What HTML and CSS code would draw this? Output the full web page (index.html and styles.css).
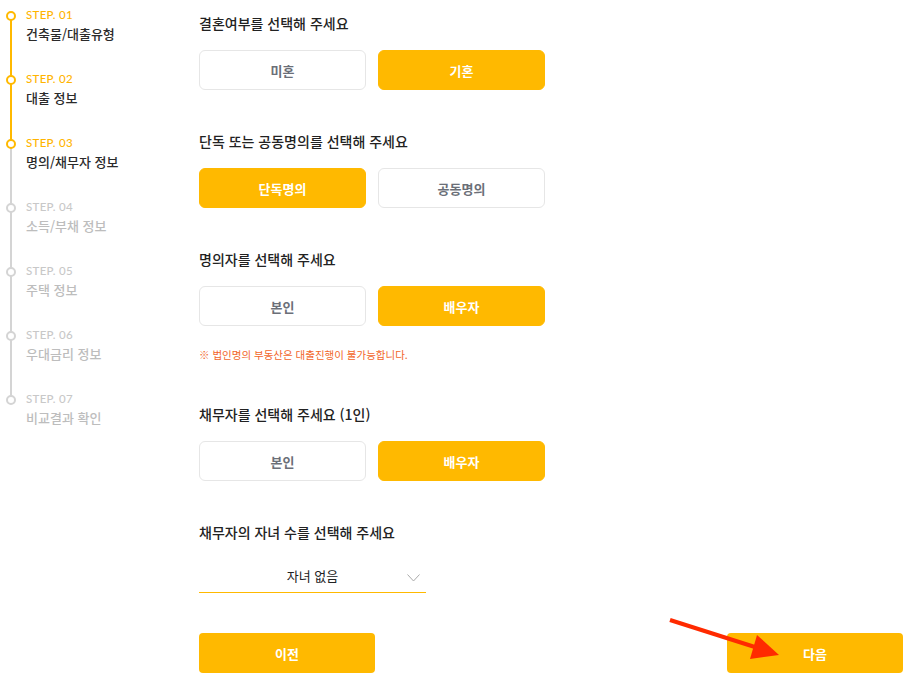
FILE: index.html
```html
<!DOCTYPE html>
<html lang="ko">
<head>
<meta charset="utf-8">
<link rel="stylesheet" href="styles.css">
</head>
<body>
<div class="page">
  <aside class="steps">
    <div class="step done"><span class="dot"></span><div class="label">STEP. 01</div><div class="title">건축물/대출유형</div></div>
    <div class="step done"><span class="dot"></span><div class="label">STEP. 02</div><div class="title">대출 정보</div></div>
    <div class="step current"><span class="dot"></span><div class="label">STEP. 03</div><div class="title">명의/채무자 정보</div></div>
    <div class="step"><span class="dot"></span><div class="label">STEP. 04</div><div class="title">소득/부채 정보</div></div>
    <div class="step"><span class="dot"></span><div class="label">STEP. 05</div><div class="title">주택 정보</div></div>
    <div class="step"><span class="dot"></span><div class="label">STEP. 06</div><div class="title">우대금리 정보</div></div>
    <div class="step last"><span class="dot"></span><div class="label">STEP. 07</div><div class="title">비교결과 확인</div></div>
  </aside>
  <main class="form">
    <section class="q">
      <h2>결혼여부를 선택해 주세요</h2>
      <div class="opts"><button class="opt">미혼</button><button class="opt on">기혼</button></div>
    </section>
    <section class="q">
      <h2>단독 또는 공동명의를 선택해 주세요</h2>
      <div class="opts"><button class="opt on">단독명의</button><button class="opt">공동명의</button></div>
    </section>
    <section class="q">
      <h2>명의자를 선택해 주세요</h2>
      <div class="opts"><button class="opt">본인</button><button class="opt on">배우자</button></div>
      <p class="note">※ 법인명의 부동산은 대출진행이 불가능합니다.</p>
    </section>
    <section class="q">
      <h2>채무자를 선택해 주세요 (1인)</h2>
      <div class="opts"><button class="opt">본인</button><button class="opt on">배우자</button></div>
    </section>
    <section class="q">
      <h2>채무자의 자녀 수를 선택해 주세요</h2>
      <div class="select"><span>자녀 없음</span>
        <svg class="chev" width="13" height="8" viewBox="0 0 13 8"><path d="M0.5 0.5 L6.5 7 L12.5 0.5" fill="none" stroke="#aaa" stroke-width="1"/></svg>
      </div>
    </section>
    <div class="nav">
      <button class="navbtn">이전</button>
      <button class="navbtn">다음</button>
    </div>
  </main>
</div>
<svg class="arrow" width="130" height="60" viewBox="660 610 130 60">
  <line x1="670" y1="620" x2="758" y2="648" stroke="#ff2a00" stroke-width="4" stroke-linecap="butt"/>
  <polygon points="757,635 779,655 750,659" fill="#ff2a00"/>
</svg>
</body>
</html>
```
FILE: styles.css
```css
* { box-sizing: border-box; }
html, body { margin: 0; padding: 0; background: #fff; }
body {
  font-family: "Noto Sans CJK KR", "Noto Sans", sans-serif;
  color: #222;
  width: 916px;
  height: 693px;
  overflow: hidden;
  position: relative;
}
.page {
  display: grid;
  grid-template-columns: 199px 704px;
}
.steps {
  padding-top: 8px;
}
.step {
  position: relative;
  height: 64px;
  padding-left: 26px;
}
.step::before {
  content: "";
  position: absolute;
  left: 10px;
  top: 8px;
  width: 2px;
  height: 64px;
  background: #d4d4d4;
}
.step.done::before { background: #ffb900; }
.step.last::before { display: none; }
.dot {
  position: absolute;
  left: 6px;
  top: 3px;
  width: 10px;
  height: 10px;
  border-radius: 50%;
  border: 2px solid #d4d4d4;
  background: #fff;
  z-index: 1;
}
.step.done .dot, .step.current .dot { border-color: #ffb900; }
.label {
  font-family: "Lato", "Open Sans", sans-serif;
  font-size: 11.5px;
  font-weight: 500;
  letter-spacing: 0.3px;
  line-height: 14px;
  color: #c8c8c8;
}
.step.done .label, .step.current .label { color: #ffb400; }
.title {
  margin-top: 4px;
  font-size: 13px;
  font-weight: 500;
  line-height: 16px;
  color: #bdbdbd;
}
.step.done .title, .step.current .title { color: #2b2b2b; }

.form { padding-top: 12px; }
.q { margin-bottom: 40px; }
.q h2 {
  margin: 0 0 16px;
  font-size: 14px;
  font-weight: 500;
  line-height: 22px;
  color: #222;
}
.opts { display: flex; gap: 12px; }
.opt {
  width: 167px;
  height: 40px;
  border-radius: 6px;
  border: 1px solid #e6e6e6;
  background: #fff;
  font-family: "Noto Sans CJK KR", sans-serif;
  font-size: 13px;
  font-weight: 700;
  color: #6b6f78;
  padding: 0;
}
.opt.on {
  background: #ffb900;
  border-color: #ffb900;
  color: #fff;
}
.note {
  margin: 21px 0 0;
  font-size: 10.5px;
  line-height: 16px;
  color: #f2662a;
}
.select {
  position: relative;
  width: 227px;
  height: 34px;
  margin-top: 14px;
  border-bottom: 1px solid #ffb900;
  display: flex;
  align-items: center;
  justify-content: center;
  font-size: 13px;
  color: #222;
}
.chev {
  position: absolute;
  right: 6px;
  top: 15px;
}
.nav {
  display: flex;
  justify-content: space-between;
  margin-top: 1px;
}
.navbtn {
  width: 176px;
  height: 40px;
  border: none;
  border-radius: 4px;
  background: #ffb900;
  color: #fff;
  font-family: "Noto Sans CJK KR", sans-serif;
  font-size: 13px;
  font-weight: 700;
}
.arrow {
  position: absolute;
  left: 660px;
  top: 610px;
}
```
